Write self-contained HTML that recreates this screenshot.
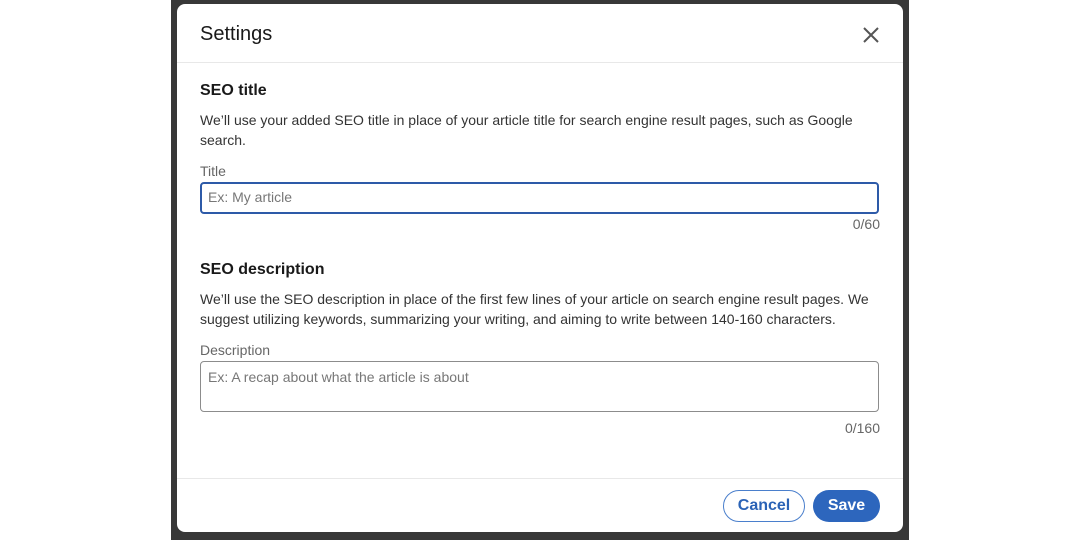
<!DOCTYPE html>
<html><head><style>
body{margin:0;width:1080px;height:540px;background:#fff;position:relative;overflow:hidden;font-family:"Liberation Sans",sans-serif;}
.dark{position:absolute;left:171px;top:0;width:738px;height:540px;background:#383838;}
.modal{position:absolute;left:177px;top:4px;width:726px;height:528px;background:#fff;border-radius:8px;}
.t{position:absolute;color:#191919;}
.hd{left:23px;top:19px;font-size:20px;}
.hr{position:absolute;left:0;width:726px;height:1px;background:#e8e8e8;}
.h2{font-size:16px;font-weight:bold;left:23px;}
.p{font-size:14px;left:23px;width:680px;line-height:20px;color:#333;}
.lab{font-size:14px;left:23px;color:#666;}
.inp{position:absolute;left:23px;width:679px;box-sizing:border-box;border:1px solid #8c8c8c;border-radius:4px;font-size:14px;color:#777;padding:7px 7px;}
.cnt{font-size:14px;right:23px;color:#666;}
.btn{position:absolute;top:486px;height:32px;box-sizing:border-box;border-radius:16px;font-size:16px;font-weight:bold;display:flex;align-items:center;justify-content:center;}
</style></head><body>
<div class="dark"></div>
<div class="modal">
<div class="t hd">Settings</div>
<svg style="position:absolute;left:686px;top:23px" width="16" height="16" viewBox="0 0 16 16"><path d="M1 1L15 15M15 1L1 15" stroke="#555" stroke-width="2"/></svg>
<div class="hr" style="top:58px"></div>
<div class="t h2" style="top:78px">SEO title</div>
<div class="t p" style="top:106px">We’ll use your added SEO title in place of your article title for search engine result pages, such as Google search.</div>
<div class="t lab" style="top:159px">Title</div>
<div class="inp" style="top:178px;height:32px;border:2px solid #2d5aa8;padding:5px 6px;">Ex: My article</div>
<div class="t cnt" style="top:212px">0/60</div>
<div class="t h2" style="top:257px">SEO description</div>
<div class="t p" style="top:285px">We’ll use the SEO description in place of the first few lines of your article on search engine result pages. We suggest utilizing keywords, summarizing your writing, and aiming to write between 140-160 characters.</div>
<div class="t lab" style="top:338px">Description</div>
<div class="inp" style="top:357px;height:51px;">Ex: A recap about what the article is about</div>
<div class="t cnt" style="top:416px">0/160</div>
<div class="hr" style="top:474px"></div>
<div class="btn" style="left:546px;width:82px;border:1px solid #4a7fcc;color:#2b63b6;">Cancel</div>
<div class="btn" style="left:636px;width:67px;background:#2d66bd;color:#fff;">Save</div>
</div>
</body></html>
